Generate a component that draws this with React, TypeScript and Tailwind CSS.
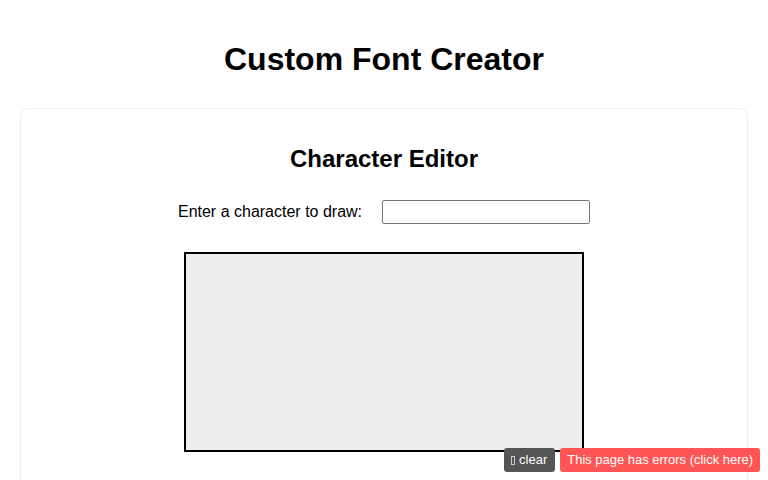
export default function App() {
  return (
    <div className="min-h-[480px] bg-white p-5 font-['Liberation_Sans',Arial,sans-serif] text-black">
      <h1 className="mt-[21px] mb-[30px] text-center text-[32px] font-bold leading-[37px]">
        Custom Font Creator
      </h1>

      {/* Editor card */}
      <div className="rounded-lg border border-[#eeeeee] px-5 pt-[36px] pb-10">
        <h2 className="text-center text-[24px] font-bold leading-[28px]">Character Editor</h2>

        <div className="mt-[27px] flex items-center justify-center gap-[20px]">
          <label className="text-base">Enter a character to draw:</label>
          <input
            type="text"
            className="h-6 w-[208px] rounded-[2px] border border-[#767676] px-1 text-sm"
          />
        </div>

        <div className="mt-[28px] flex justify-center">
          <div className="h-[200px] w-[400px] border-2 border-black bg-[#eeeeee]" />
        </div>
      </div>

      {/* Error overlay buttons */}
      <div className="fixed right-2 bottom-2 flex gap-[5px] text-[13px] leading-[24px]">
        <button className="flex items-center gap-[4px] rounded-[3px] bg-[#555555] pr-2 pl-[7px] text-white">
          <span className="inline-block h-[9px] w-[4px] border border-white/70" />
          clear
        </button>
        <button className="rounded-[3px] bg-[#ff5555] px-[7px] tracking-[-0.02px] text-white">
          This page has errors (click here)
        </button>
      </div>
    </div>
  );
}
